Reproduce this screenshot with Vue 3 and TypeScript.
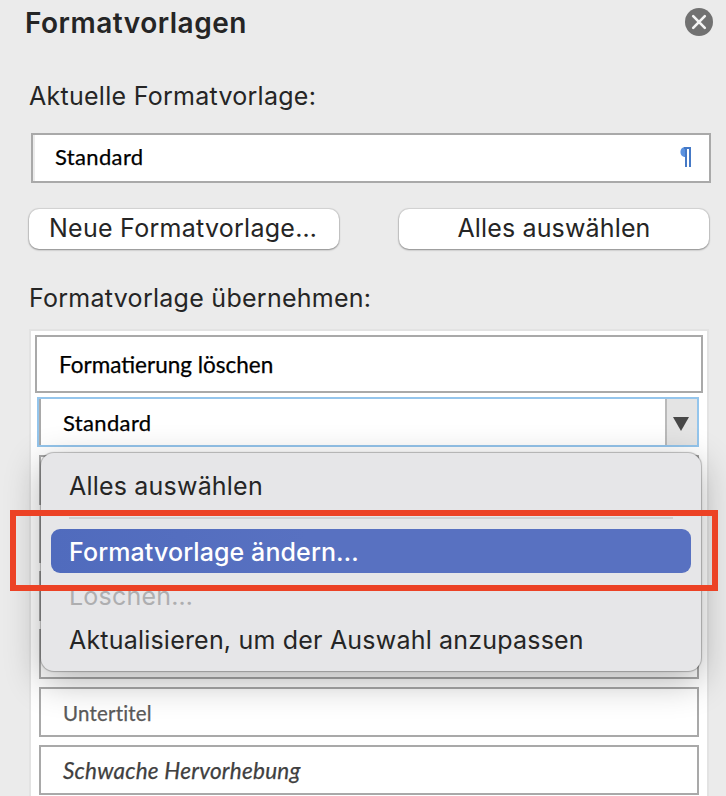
<script setup lang="ts">
import { ref } from 'vue'

interface StyleEntry {
  id: number
  name: string
  kind?: 'subtitle' | 'emphasis'
}

interface MenuEntry {
  label: string
  state?: 'active' | 'disabled'
  separator?: boolean
}

const current = ref('Standard')

const styles: StyleEntry[] = [
  { id: 1, name: '' },
  { id: 2, name: '' },
  { id: 3, name: '' },
  { id: 4, name: '' },
  { id: 5, name: 'Untertitel', kind: 'subtitle' },
  { id: 6, name: 'Schwache Hervorhebung', kind: 'emphasis' },
]

const menu: MenuEntry[] = [
  { label: 'Alles auswählen', separator: true },
  { label: 'Formatvorlage ändern…', state: 'active' },
  { label: 'Löschen…', state: 'disabled' },
  { label: 'Aktualisieren, um der Auswahl anzupassen' },
]
</script>

<template>
  <main class="pane">
    <header class="head">
      <h1 class="title">Formatvorlagen</h1>
      <button class="close" aria-label="Schließen">
        <svg width="28" height="28" viewBox="0 0 28 28">
          <circle cx="14" cy="14" r="14" fill="#717171" />
          <path d="M8.2 8.2 19.8 19.8M19.8 8.2 8.2 19.8" stroke="#f4f4f4" stroke-width="2.6" stroke-linecap="round" />
        </svg>
      </button>
    </header>

    <p class="label">Aktuelle Formatvorlage:</p>
    <div class="field">
      <span class="sample">{{ current }}</span>
      <svg class="pilcrow" width="12" height="20" viewBox="0 0 12 20">
        <path d="M12 0H5.2a5.2 5.2 0 0 0 0 10H6V0Z" fill="#5b92e0" />
        <path d="M5 1H12M7 0V20M11 0V20" stroke="#4579c6" stroke-width="2" fill="none" />
      </svg>
    </div>

    <div class="actions">
      <button class="btn new">Neue Formatvorlage…</button>
      <button class="btn all">Alles auswählen</button>
    </div>

    <p class="label apply">Formatvorlage übernehmen:</p>
    <section class="list">
      <div class="clear"><span class="sample long">Formatierung löschen</span></div>
      <div class="selected">
        <span class="sample">{{ current }}</span>
        <span class="drop">
          <svg width="16" height="14" viewBox="0 0 16 14"><path d="M0 0H16L8 14Z" fill="#484848" /></svg>
        </span>
        <div class="menu">
          <template v-for="entry in menu" :key="entry.label">
            <div class="entry" :class="entry.state"><span>{{ entry.label }}</span></div>
            <div v-if="entry.separator" class="separator"></div>
          </template>
        </div>
        <div class="callout"></div>
      </div>
      <div v-for="s in styles" :key="s.id" class="row">
        <span class="sample" :class="s.kind">{{ s.name }}</span>
      </div>
    </section>
  </main>
</template>

<style>
body {
  background: #ebebeb;
  overflow: hidden;
}
</style>

<style scoped>
* {
  box-sizing: border-box;
}
.pane {
  width: 726px;
  height: 796px;
  overflow: hidden;
  background: #ebebeb;
  color: #252525;
  font: 400 25px/32px Inter, sans-serif;
}
.head {
  display: flex;
  justify-content: space-between;
  height: 80px;
  padding: 7px 13px 0 25px;
}
.title {
  margin: 0;
  font-size: 28px;
  font-weight: 600;
  line-height: 32px;
  letter-spacing: 0.5px;
}
.close {
  width: 28px;
  height: 28px;
  margin-top: 1px;
  padding: 0;
  border: 0;
  background: none;
}
.close svg,
.drop svg {
  display: block;
}
.label {
  margin: 0 0 21px 29px;
  letter-spacing: 0.27px;
}
.field {
  display: flex;
  align-items: center;
  justify-content: space-between;
  width: 680px;
  height: 50px;
  margin-left: 31px;
  padding: 0 18px 2px 22px;
  border: 2px solid #a9a9a9;
  background: #fff;
  box-shadow: inset 2px 0 #ebebeb;
}
.sample {
  color: #000;
  font: 400 22px/30px Lato, sans-serif;
  letter-spacing: 0.35px;
  white-space: nowrap;
  -webkit-text-stroke: 0.25px currentColor;
}
.sample.long {
  font-size: 22.5px;
  letter-spacing: normal;
}
.actions {
  display: flex;
  gap: 60px;
  margin: 26px 0 33px 29px;
}
.btn {
  width: 310px;
  height: 40px;
  padding: 0 0 2px;
  border: 0;
  border-radius: 10px;
  background: #fff;
  box-shadow: 0 0 1px 1px rgba(0, 0, 0, 0.1), 0 1px 2px rgba(0, 0, 0, 0.35);
  color: #252525;
  font: 400 25px/38px Inter, sans-serif;
  letter-spacing: 0.15px;
  white-space: nowrap;
}
.btn.new {
  padding-right: 2px;
  letter-spacing: 0.27px;
}
.apply {
  margin-bottom: 15px;
}
.list {
  display: flex;
  flex-direction: column;
  gap: 8px;
  width: 680px;
  height: 480px;
  margin-left: 29px;
  padding: 4px 8px 0;
  border: 2px solid #e3e3e3;
  background: #fff;
}
.clear {
  display: flex;
  flex: none;
  align-items: center;
  width: 668px;
  height: 58px;
  margin: 0 0 -4px -4px;
  padding: 1px 0 0 22px;
  border: 2px solid #a9a9a9;
}
.selected {
  position: relative;
  display: flex;
  flex: none;
  align-items: center;
  width: 662px;
  height: 50px;
  margin-left: -2px;
  padding-left: 24px;
  border: 2px solid #94c5ec;
  box-shadow: inset 2px 0 #a9a9a9;
}
.selected > .sample {
  padding-top: 2px;
}
.drop {
  display: flex;
  align-items: center;
  justify-content: center;
  width: 32px;
  height: 46px;
  margin-left: auto;
  padding: 3px 2px 0 0;
  border-left: 2px solid #bababa;
  background: #e4e4e4;
}
.row {
  display: flex;
  flex: none;
  align-items: center;
  width: 660px;
  height: 50px;
  padding: 1px 0 0 22px;
  border: 2px solid #a9a9a9;
}
.sample.subtitle {
  color: #5a5a5a;
  font-size: 20.5px;
  letter-spacing: 0.2px;
}
.sample.emphasis {
  color: #404040;
  font-size: 22.5px;
  font-style: italic;
  letter-spacing: 0.25px;
}
.menu {
  position: absolute;
  z-index: 1;
  top: 54px;
  left: 2px;
  width: 660px;
  height: 218px;
  padding: 11px 10px;
  border-radius: 13px;
  background: #e6e6e8;
  box-shadow: 0 0 1px 1px rgba(0, 0, 0, 0.25), 0 10px 36px rgba(0, 0, 0, 0.3);
}
.entry {
  height: 44px;
  padding-left: 18px;
  border-radius: 9px;
  line-height: 46px;
  letter-spacing: 0.2px;
  white-space: nowrap;
}
.entry:first-child {
  line-height: 45px;
}
.entry.active {
  background: linear-gradient(90deg, #506bbd, #5871c1 40%);
  color: #fff;
  font-weight: 500;
  letter-spacing: 0.1px;
}
.entry.disabled {
  color: #aeaeb0;
}
.separator {
  height: 2px;
  margin: 9px 18px 10px;
  background: #cfcfd1;
}
.callout {
  position: absolute;
  z-index: 2;
  top: 111px;
  left: -29px;
  width: 708px;
  height: 81px;
  border: 6px solid #ec4225;
}
</style>
